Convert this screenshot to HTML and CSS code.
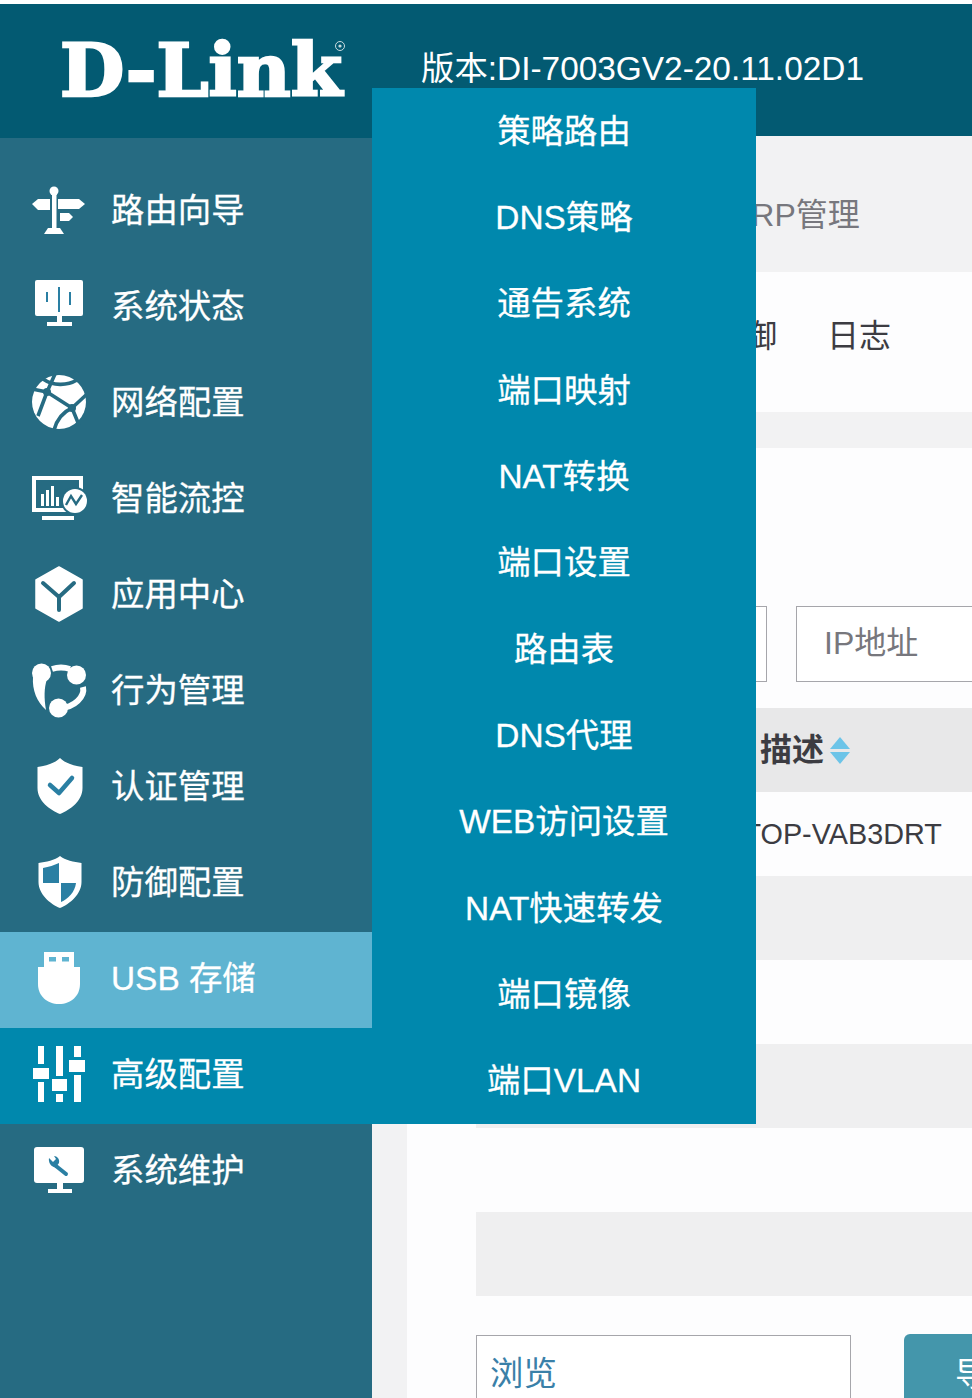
FILE: index.html
```html
<!DOCTYPE html>
<html lang="zh-CN">
<head>
    <meta charset="UTF-8">
    <title>D-Link DI-7003GV2</title>
    <link rel="stylesheet" href="styles.css">
</head>
<body>
    <header class="top-bar">
        <svg class="logo" viewBox="0 0 300 84" width="300" height="84">
            <text x="2" y="70" textLength="282" lengthAdjust="spacingAndGlyphs" class="logo-text">D-Link</text>
            <circle cx="282" cy="20" r="4.5" class="logo-reg"/>
            <circle cx="282" cy="20" r="1.6" class="logo-reg-dot"/>
        </svg>
        <div class="version">版本:DI-7003GV2-20.11.02D1</div>
    </header>
    <div class="layout">
        <nav class="sidebar">
            <a class="nav-item">
                <svg class="nav-icon" viewBox="0 0 60 60">
                    <circle cx="25" cy="11" r="4.5" fill="#fff"/>
                    <rect x="23" y="11" width="4.5" height="39" fill="#fff"/>
                    <path d="M15 54 19 48H31L35 54Z" fill="#fff"/>
                    <path d="M3 24 9 19H21V30H9Z" fill="#fff"/>
                    <path d="M29 19H50L56 24 50 29H29Z" fill="#fff"/>
                    <path d="M31 33H40L44 37 40 41H31Z" fill="#fff"/>
                </svg>
                <span>路由向导</span>
            </a>
            <a class="nav-item">
                <svg class="nav-icon" viewBox="0 0 60 60">
                    <rect x="6" y="4" width="48" height="36" rx="2" fill="#fff"/>
                    <rect x="28" y="40" width="5" height="7" fill="#fff"/>
                    <rect x="18" y="46" width="25" height="4" fill="#fff"/>
                    <path d="M18 16V26M30 11V36M41 16V29" stroke="#2a7fa3" stroke-width="2" fill="none"/>
                </svg>
                <span>系统状态</span>
            </a>
            <a class="nav-item">
                <svg class="nav-icon" viewBox="0 0 60 60">
                    <circle cx="30" cy="30" r="27" fill="#fff"/>
                    <path d="M18 20 26 2M18 20 3 17M18 20 43 36M18 20 9 44M43 36 57 23M43 36C34 40 28 47 25 58M43 36 50 53M14 7C24 14 38 14 48 8" stroke="#266b82" stroke-width="3.6" fill="none"/>
                    <circle cx="18" cy="20" r="4" fill="#266b82"/>
                    <circle cx="43" cy="36" r="4" fill="#266b82"/>
                </svg>
                <span>网络配置</span>
            </a>
            <a class="nav-item">
                <svg class="nav-icon" viewBox="0 0 60 60">
                    <path d="M3 8H54V30H50V12H7V40H38V44H3Z" fill="#fff"/>
                    <rect x="13" y="48" width="32" height="4" fill="#fff"/>
                    <path d="M12 26H15V38H12ZM17 22H20V38H17ZM22 18H25V38H22ZM27 29H30V38H27Z" fill="#fff"/>
                    <circle cx="46" cy="33" r="14" fill="#266b82"/>
                    <circle cx="46" cy="33" r="12" fill="#fff"/>
                    <path d="M37 37 42 28 47 36 53 27" stroke="#266b82" stroke-width="2.4" fill="none"/>
                </svg>
                <span>智能流控</span>
            </a>
            <a class="nav-item">
                <svg class="nav-icon" viewBox="0 0 60 60">
                    <path d="M30 3 53 16V44L30 57 7 44V16Z" fill="#fff" stroke="#fff" stroke-width="1.5" stroke-linejoin="round"/>
                    <path d="M14 19 30 33 45 19M30 33V46" stroke="#266b82" stroke-width="4" stroke-linecap="round" stroke-linejoin="round" fill="none"/>
                </svg>
                <span>应用中心</span>
            </a>
            <a class="nav-item">
                <svg class="nav-icon" viewBox="0 0 60 60">
                    <path d="M23 9C29 7 35 7 41 9" stroke="#fff" stroke-width="6" fill="none"/>
                    <path d="M54 27C56 36 46 48 30 48" stroke="#fff" stroke-width="6" fill="none"/>
                    <path d="M4 17C3 30 8 42 17 50 15 38 15 28 18 19Z" fill="#fff"/>
                    <circle cx="12.500" cy="13" r="9.500" fill="#fff"/>
                    <circle cx="47.500" cy="15" r="9.500" fill="#fff"/>
                    <circle cx="29.500" cy="48" r="9.500" fill="#fff"/>
                </svg>
                <span>行为管理</span>
            </a>
            <a class="nav-item">
                <svg class="nav-icon" viewBox="0 0 60 60">
                    <path d="M31 2C36 7 45 10 53.500 11V32C53.500 45 41 54 31 58 21 54 8.500 45 8.500 32V11C17 10 26 7 31 2Z" fill="#fff"/>
                    <path d="M21 29 30 37 43 22" stroke="#2a7fa3" stroke-width="4.500" stroke-linecap="round" stroke-linejoin="round" fill="none"/>
                </svg>
                <span>认证管理</span>
            </a>
            <a class="nav-item">
                <svg class="nav-icon" viewBox="0 0 60 60">
                    <path d="M31 4C36 8 45 10 52.500 11V30C52.500 42 41 52 31 56 21 52 9.500 42 9.500 30V11C17 10 26 8 31 4Z" fill="#fff"/>
                    <path d="M30 11C25 13 20 15 14 16V31H30Z" fill="#2a7fa3"/>
                    <path d="M32 31H47C46 40 39 47 32 50Z" fill="#2a7fa3"/>
                </svg>
                <span>防御配置</span>
            </a>
            <a class="nav-item active">
                <svg class="nav-icon" viewBox="0 0 60 60">
                    <path d="M15 4H45V19H15Z" fill="#fff"/>
                    <path d="M9 19H51V36C51 48 42 56 30 56 18 56 9 48 9 36Z" fill="#fff"/>
                    <rect x="20" y="9" width="7" height="4.500" fill="#5fb4d1"/>
                    <rect x="33" y="9" width="7" height="4.500" fill="#5fb4d1"/>
                </svg>
                <span>USB 存储</span>
            </a>
            <a class="nav-item open">
                <svg class="nav-icon" viewBox="0 0 60 60">
                    <path d="M9 2H15V20H9ZM9 38H15V58H9ZM27 2H34V32H27ZM27 50H34V58H27ZM45 2H52V13H45ZM45 31H52V58H45Z" fill="#fff"/>
                    <path d="M4 24H20V35H4ZM23 35H38V47H23ZM40 16H56V28H40Z" fill="#fff"/>
                </svg>
                <span>高级配置</span>
                <ul class="submenu">
                    <li>策略路由</li>
                    <li>DNS策略</li>
                    <li>通告系统</li>
                    <li>端口映射</li>
                    <li>NAT转换</li>
                    <li>端口设置</li>
                    <li>路由表</li>
                    <li>DNS代理</li>
                    <li>WEB访问设置</li>
                    <li>NAT快速转发</li>
                    <li>端口镜像</li>
                    <li>端口VLAN</li>
                </ul>
            </a>
            <a class="nav-item">
                <svg class="nav-icon" viewBox="0 0 60 60">
                    <rect x="5" y="7" width="50" height="36" rx="3" fill="#fff"/>
                    <rect x="28" y="43" width="6" height="7" fill="#fff"/>
                    <rect x="19" y="49" width="24" height="4" fill="#fff"/>
                    <path d="M27 26 37 34" stroke="#2a7fa3" stroke-width="4" stroke-linecap="round"/>
                    <path d="M20 18 24 22 27 19 25 16C28 16 31 19 30 23L27 27C23 28 19 23 20 18Z" fill="#2a7fa3"/>
                </svg>
                <span>系统维护</span>
            </a>
        </nav>
        <main class="content">
            <div class="tabs">ARP管理</div>
            <div class="panel">
                <div class="sub-tabs">
                    <span>防御</span>
                    <span>日志</span>
                </div>
                <div class="sub-bar"></div>
                <div class="filters">
                    <div class="field field-first"></div>
                    <div class="field field-ip">IP地址</div>
                </div>
                <div class="table">
                    <div class="row row-head">
                        <span>描述</span>
                        <span class="sort"><i class="sort-up"></i><i class="sort-down"></i></span>
                    </div>
                    <div class="row row-host">DESKTOP-VAB3DRT</div>
                    <div class="row row-alt"></div>
                    <div class="row"></div>
                    <div class="row row-alt"></div>
                    <div class="row"></div>
                    <div class="row row-alt"></div>
                </div>
                <div class="upload">
                    <div class="file-box">浏览</div>
                    <button class="import-btn" type="button">导入</button>
                </div>
            </div>
        </main>
    </div>
</body>
</html>
```

FILE: styles.css
```css
html, body {
    height: 100%;
}

body {
    margin: 0;
    padding-top: 4px;
    box-sizing: border-box;
    overflow: hidden;
    background-color: #fff;
    font-family: "Liberation Sans", "Noto Sans CJK SC", sans-serif;
    font-size: 33.4px;
}

.top-bar {
    display: flex;
    align-items: center;
    gap: 63px;
    height: 134px;
    padding-left: 58px;
    padding-bottom: 12px;
    box-sizing: border-box;
    background-color: #035a72;
    color: #fff;
}

.logo {
    flex: none;
    margin-top: 5px;
    overflow: visible;
}

.logo-text {
    font-family: "DejaVu Serif", serif;
    font-weight: 700;
    font-size: 72px;
    fill: #fff;
    stroke: #fff;
    stroke-width: 2.5px;
}

.logo-reg {
    fill: none;
    stroke: #c9dbe0;
    stroke-width: 1;
}

.logo-reg-dot {
    fill: #c9dbe0;
}

.version {
    white-space: nowrap;
}

.layout {
    display: flex;
    height: 1260px;
}

.sidebar {
    flex: none;
    width: 372px;
    padding-top: 26px;
    box-sizing: border-box;
    background-color: #266b82;
}

.nav-item {
    display: flex;
    align-items: center;
    gap: 22px;
    height: 96px;
    padding-left: 29px;
    padding-bottom: 5px;
    box-sizing: border-box;
    color: #fff;
    -webkit-text-stroke: 0.3px #fff;
}

.nav-item > span {
    margin-bottom: 4px;
}

.nav-item.active {
    background-color: #5fb4d1;
}

.nav-item.open {
    position: relative;
    background-color: #0088ad;
}

.nav-icon {
    flex: none;
    width: 60px;
    height: 60px;
}

.submenu {
    position: absolute;
    left: 372px;
    bottom: 0;
    z-index: 2;
    display: flex;
    flex-direction: column;
    width: 384px;
    height: 1036px;
    margin: 0;
    padding: 0;
    list-style: none;
    background-color: #0088ad;
}

.submenu li {
    flex: 1;
    display: flex;
    align-items: center;
    justify-content: center;
    padding-bottom: 6px;
}

.content {
    flex: 1;
    min-width: 0;
    margin-top: -2px;
    overflow: hidden;
    background-color: #f2f2f3;
}

.tabs {
    display: flex;
    align-items: center;
    height: 136px;
    padding-left: 358px;
    padding-top: 16px;
    box-sizing: border-box;
    font-size: 32px;
    color: #77777d;
}

.panel {
    margin-left: 35px;
    background-color: #fdfdfe;
}

.sub-tabs {
    display: flex;
    align-items: center;
    gap: 50px;
    height: 140px;
    padding-left: 306px;
    padding-bottom: 18px;
    box-sizing: border-box;
    font-size: 32px;
    color: #3c3c42;
}

.sub-bar {
    height: 36px;
    background-color: #f2f2f3;
}

.filters {
    display: flex;
    gap: 29px;
    padding: 158px 0 26px 69px;
}

.field {
    flex: none;
    height: 76px;
    box-sizing: border-box;
    border: 1px solid #a6a6ab;
    background-color: #fff;
}

.field-first {
    width: 291px;
}

.field-ip {
    width: 300px;
    padding-left: 27px;
    line-height: 73px;
    font-size: 32px;
    color: #77777d;
}

.table {
    margin-left: 69px;
}

.row {
    display: flex;
    align-items: center;
    height: 84px;
    padding-left: 189px;
    box-sizing: border-box;
    white-space: nowrap;
}

.row-head {
    gap: 6px;
    padding-left: 284px;
    padding-bottom: 6px;
    background-color: #e8e8e9;
    font-size: 32px;
    font-weight: 700;
    color: #3c3c42;
}

.row-host {
    font-size: 28.8px;
    color: #3c3c42;
}

.row-alt {
    background-color: #efeff0;
}

.sort {
    display: flex;
    flex-direction: column;
    gap: 3px;
    margin-top: 6px;
}

.sort i {
    display: block;
    width: 0;
    height: 0;
    border-left: 10px solid transparent;
    border-right: 10px solid transparent;
}

.sort-up {
    border-bottom: 12px solid #6cc4e8;
}

.sort-down {
    border-top: 12px solid #6cc4e8;
}

.upload {
    display: flex;
    gap: 53px;
    padding: 39px 0 0 69px;
}

.file-box {
    flex: none;
    width: 375px;
    height: 75px;
    padding-left: 13px;
    box-sizing: border-box;
    border: 1px solid #a6a6ab;
    background-color: #fff;
    line-height: 76px;
    color: #3a80a8;
}

.import-btn {
    flex: none;
    width: 140px;
    height: 75px;
    margin-top: -1px;
    padding: 0 0 0 51px;
    border: none;
    border-radius: 6px;
    background-color: #4496ab;
    font: inherit;
    color: #fff;
    text-align: left;
    white-space: nowrap;
}
```
